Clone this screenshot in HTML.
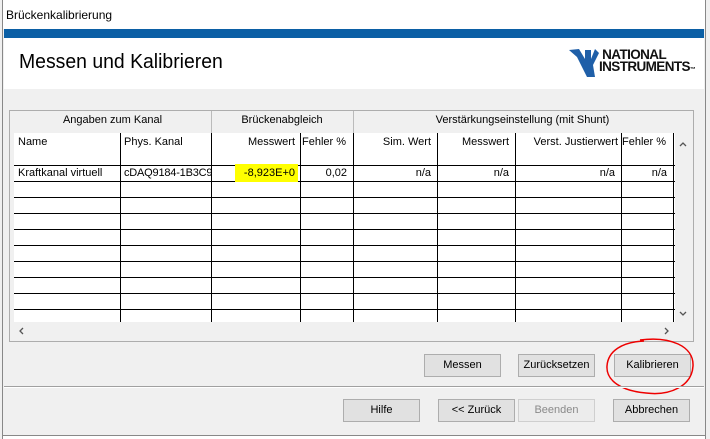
<!DOCTYPE html>
<html><head><meta charset="utf-8"><style>
*{margin:0;padding:0;box-sizing:border-box}
body{width:710px;height:439px;background:#fff;font-family:"Liberation Sans",sans-serif;font-size:11px;color:#000;position:relative;overflow:hidden}
.a{position:absolute}
.btn{position:absolute;height:23px;background:#e1e1e1;border:1px solid #adadad;text-align:center;line-height:21px;font-size:11px}
.t{position:absolute;white-space:nowrap}
</style></head><body>
<div class="a" style="left:0;top:0;width:3px;height:439px;background:#f0f0f0;border-right:1px solid #888"></div>
<div class="a" style="left:705px;top:0;width:5px;height:439px;background:#f0f0f0;border-left:1px solid #888"></div>
<div class="a" style="left:3px;top:0;width:702px;height:436px;background:#f0f0f0;border-bottom:1px solid #888"></div>
<div class="a" style="left:3px;top:0;width:702px;height:29px;background:#fff"></div>
<div class="t" style="left:6px;top:8px;font-size:12px">Brückenkalibrierung</div>
<div class="a" style="left:4px;top:29px;width:700px;height:9px;background:#0b5fa5"></div>
<div class="a" style="left:4px;top:38px;width:700px;height:51px;background:#fff"></div>
<div class="t" style="left:19px;top:51px;font-size:20px;transform:scaleX(0.97);transform-origin:left">Messen und Kalibrieren</div>
<svg class="a" style="left:569px;top:47px" width="30" height="32" viewBox="0 0 30 32"><path d="M0 3 L10 2 L16 12 L16 3 L22 3 L22 12 L26 2 L30 6 L24 18 L26 30 L18 30 L12 18 L8 10 Z" fill="#1f5fa8"/></svg>
<div class="t" style="left:599px;top:49px;font-size:13.5px;font-weight:bold;line-height:12px;letter-spacing:-0.6px;color:#111">&nbsp;NATIONAL<br>INSTRUMENTS<span style="font-size:6px">™</span></div>
<div class="a" style="left:9px;top:110px;width:685px;height:232px;border:1px solid #adadad;background:#f0f0f0"></div>
<div class="a" style="left:211px;top:111px;width:1px;height:22px;background:#bbb"></div>
<div class="a" style="left:353px;top:111px;width:1px;height:22px;background:#bbb"></div>
<div class="t" style="left:14px;top:114px;width:197px;text-align:center">Angaben zum Kanal</div>
<div class="t" style="left:211px;top:114px;width:142px;text-align:center">Brückenabgleich</div>
<div class="t" style="left:353px;top:114px;width:339px;text-align:center">Verstärkungseinstellung (mit Shunt)</div>
<div class="a" style="left:14px;top:133px;width:661px;height:189px;background:#fff"></div>
<svg class="a" style="left:14px;top:133px" width="661" height="189">
<g stroke="#000" stroke-width="1">
<line x1="106.5" y1="0" x2="106.5" y2="189"/><line x1="197.5" y1="0" x2="197.5" y2="189"/><line x1="286.5" y1="0" x2="286.5" y2="189"/><line x1="339.5" y1="0" x2="339.5" y2="189"/><line x1="423.5" y1="0" x2="423.5" y2="189"/><line x1="501.5" y1="0" x2="501.5" y2="189"/><line x1="607.5" y1="0" x2="607.5" y2="189"/><line x1="659.5" y1="0" x2="659.5" y2="189"/>
<line x1="0" y1="32.5" x2="661" y2="32.5"/><line x1="0" y1="48.5" x2="661" y2="48.5"/><line x1="0" y1="64.5" x2="661" y2="64.5"/><line x1="0" y1="80.5" x2="661" y2="80.5"/><line x1="0" y1="96.5" x2="661" y2="96.5"/><line x1="0" y1="112.5" x2="661" y2="112.5"/><line x1="0" y1="128.5" x2="661" y2="128.5"/><line x1="0" y1="144.5" x2="661" y2="144.5"/><line x1="0" y1="160.5" x2="661" y2="160.5"/><line x1="0" y1="176.5" x2="661" y2="176.5"/>
</g></svg>
<div class="a" style="left:235px;top:164px;width:63px;height:18px;background:#ffff00"></div>
<div class="t" style="left:18px;top:136px">Name</div>
<div class="t" style="left:124px;top:136px">Phys. Kanal</div>
<div class="t" style="left:211px;top:136px;width:84px;text-align:right">Messwert</div>
<div class="t" style="left:302px;top:136px">Fehler %</div>
<div class="t" style="left:353px;top:136px;width:78px;text-align:right">Sim. Wert</div>
<div class="t" style="left:437px;top:136px;width:72px;text-align:right">Messwert</div>
<div class="t" style="left:515px;top:136px;width:103px;text-align:right">Verst. Justierwert</div>
<div class="t" style="left:622px;top:136px">Fehler %</div>
<div class="t" style="left:18px;top:167px">Kraftkanal virtuell</div>
<div class="t" style="left:124px;top:167px;letter-spacing:-0.2px">cDAQ9184-1B3C9</div>
<div class="t" style="left:211px;top:167px;width:84px;text-align:right">-8,923E+0</div>
<div class="t" style="left:300px;top:167px;width:47px;text-align:right">0,02</div>
<div class="t" style="left:353px;top:167px;width:78px;text-align:right">n/a</div>
<div class="t" style="left:437px;top:167px;width:72px;text-align:right">n/a</div>
<div class="t" style="left:515px;top:167px;width:100px;text-align:right">n/a</div>
<div class="t" style="left:621px;top:167px;width:46px;text-align:right">n/a</div>
<svg class="a" style="left:678px;top:140px" width="10" height="8"><path d="M2 6 L5 3 L8 6" fill="none" stroke="#555" stroke-width="1.3"/></svg>
<svg class="a" style="left:678px;top:310px" width="10" height="8"><path d="M2 2 L5 5 L8 2" fill="none" stroke="#555" stroke-width="1.3"/></svg>
<svg class="a" style="left:17px;top:326px" width="8" height="10"><path d="M6 2 L3 5 L6 8" fill="none" stroke="#555" stroke-width="1.3"/></svg>
<svg class="a" style="left:663px;top:326px" width="8" height="10"><path d="M2 2 L5 5 L2 8" fill="none" stroke="#555" stroke-width="1.3"/></svg>
<div class="btn" style="left:424px;top:354px;width:77px">Messen</div>
<div class="btn" style="left:518px;top:354px;width:77px">Zurücksetzen</div>
<div class="btn" style="left:614px;top:354px;width:77px">Kalibrieren</div>
<svg class="a" style="left:600px;top:336px" width="100" height="62"><path d="M40 4 C70 0 94 10 93 30 C92 50 70 60 46 57 C22 55 6 45 7 30 C8 15 22 6 44 5" fill="none" stroke="#e00" stroke-width="1.5"/></svg>
<div class="a" style="left:4px;top:386px;width:700px;height:1px;background:#a0a0a0"></div>
<div class="a" style="left:4px;top:387px;width:700px;height:1px;background:#fff"></div>
<div class="btn" style="left:343px;top:399px;width:77px">Hilfe</div>
<div class="btn" style="left:438px;top:399px;width:77px">&lt;&lt; Zurück</div>
<div class="btn" style="left:518px;top:399px;width:77px;color:#8a8a8a;background:#ececec;border-color:#cfcfcf">Beenden</div>
<div class="btn" style="left:613px;top:399px;width:77px">Abbrechen</div>
</body></html>
